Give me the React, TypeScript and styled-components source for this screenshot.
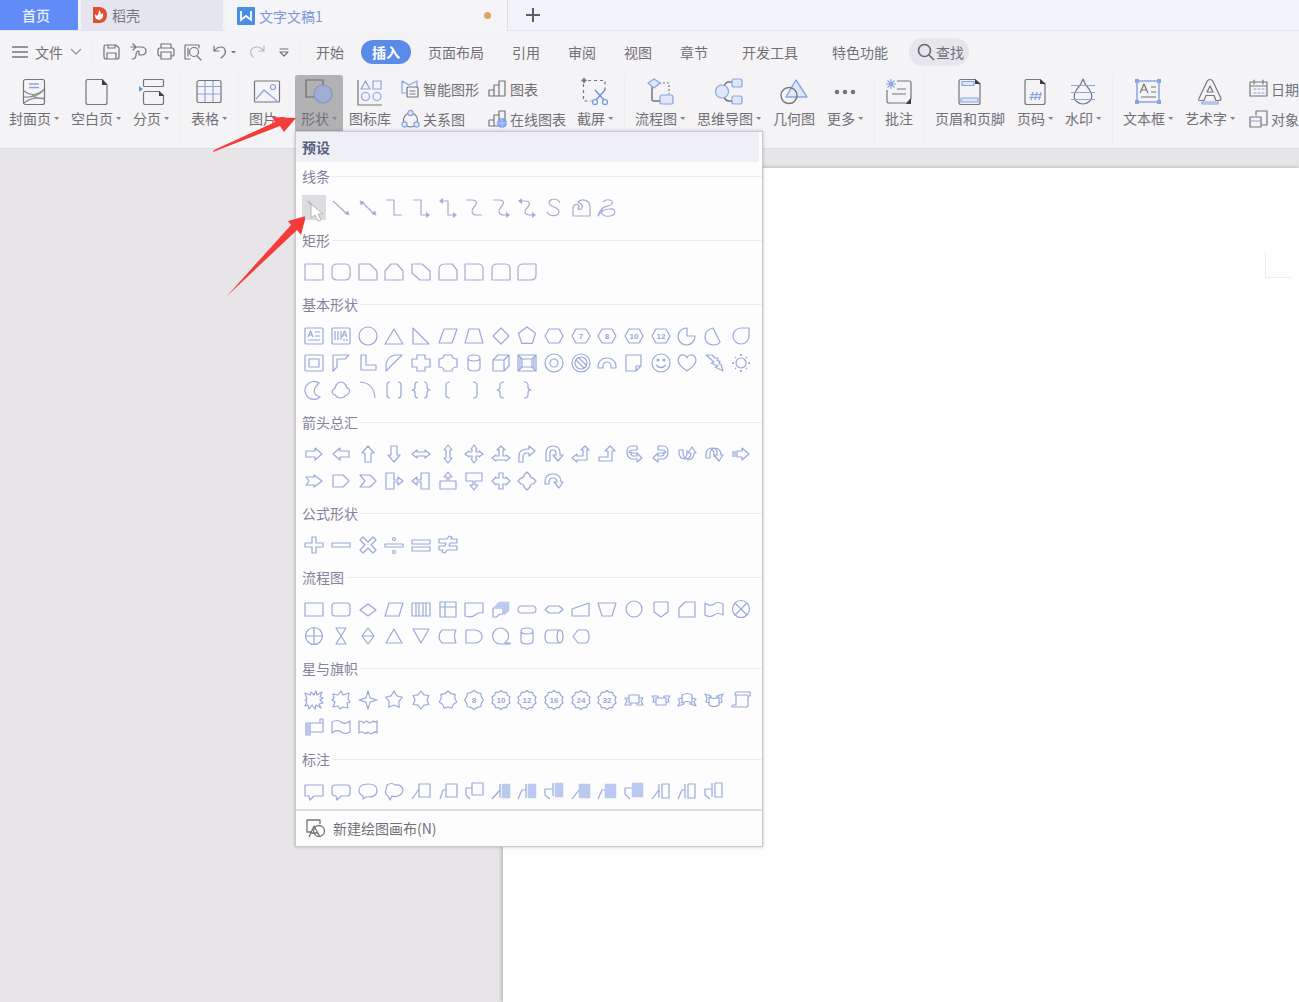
import React from "react";
import styled, { createGlobalStyle } from "styled-components";

const INK = "#75757b";
const BLUE = "#8aa5e2";
const PALE = "#dfe8fb";
const FOLD = "#3c3c42";

const GlobalStyle = createGlobalStyle`
  *, *::before, *::after { box-sizing: border-box; }
  body {
    margin: 0;
    font-family: "Noto Sans CJK SC", "Noto Sans", sans-serif;
    font-size: 14px;
    line-height: 20px;
    color: #717077;
    background: #e7e5e8;
  }
  button {
    font: inherit;
    color: inherit;
    border: 0;
    padding: 0;
    margin: 0;
    background: none;
    cursor: default;
    white-space: nowrap;
  }
  h2, h3 { margin: 0; font: inherit; }
  svg { display: block; flex: none; }
`;

const Shell = styled.div`
  position: relative;
  display: flex;
  flex-direction: column;
  min-height: 100vh;
  overflow: hidden;
`;

/* ---------- document tabs ---------- */

const TabStrip = styled.nav`
  display: flex;
  height: 31px;
  background: #f2f3f8;
  border-bottom: 1px solid #e4e4ec;
`;

const HomeTab = styled.button`
  width: 78px;
  height: 30px;
  padding-right: 6px;
  background: #618cf8;
  color: #e9f0ff;
  font-weight: 500;
`;

const DocTab = styled.button<{ $width: number; $active?: boolean }>`
  display: flex;
  align-items: center;
  gap: 4px;
  width: ${(p) => p.$width}px;
  height: ${(p) => (p.$active ? 31 : 30)}px;
  margin-left: 3px;
  padding: 0 16px 0 11px;
  background: ${(p) => (p.$active ? "#f5f5f9" : "#e4e5ef")};
  color: ${(p) => (p.$active ? "#7b97da" : "#75757d")};
  border-right: 1px solid ${(p) => (p.$active ? "#dedee6" : "#e4e5ef")};
`;

const DirtyDot = styled.span`
  width: 7px;
  height: 7px;
  margin-left: auto;
  border-radius: 50%;
  background: #dca362;
`;

const NewTab = styled.button`
  display: grid;
  place-items: center;
  width: 50px;
  height: 30px;
`;

/* ---------- menu bar ---------- */

const MenuBar = styled.div`
  display: flex;
  align-items: center;
  height: 42px;
  padding-left: 12px;
  background: #f4f3f6;
`;

const FileMenu = styled.button`
  display: flex;
  align-items: center;
  gap: 7px;
  width: 80px;
`;

const QuickTools = styled.div`
  display: flex;
  align-items: center;
  gap: 7px;
  height: 24px;
  padding: 0 6px 0 9px;
  border-left: 1px solid #ececf0;
  border-right: 1px solid #ececf0;
`;

const MenuTabs = styled.nav`
  display: flex;
  align-items: center;
  padding-left: 1px;
`;

const MenuTab = styled.button<{ $wide?: boolean }>`
  padding: 0 ${(p) => (p.$wide ? 17 : 14)}px;
  height: 24px;
`;

const ExtraTabs = styled.div`
  display: flex;
  padding-left: 3px;
`;

const ActiveTab = styled.button`
  height: 24px;
  margin: 0 3px;
  padding: 0 11px;
  border-radius: 12px;
  background: #5b8be8;
  color: #fff;
  font-weight: 700;
`;

const Search = styled.button`
  display: flex;
  align-items: center;
  gap: 1px;
  height: 28px;
  margin-left: 4px;
  padding: 0 5px 0 8px;
  border-radius: 14px;
  background: #e7e6ec;
`;

/* ---------- ribbon ---------- */

const Ribbon = styled.div`
  display: flex;
  height: 75px;
  padding: 2px 0 0 3px;
  background: #f4f3f6;
`;

const ToolButton = styled.button<{ $open?: boolean }>`
  display: flex;
  flex: none;
  flex-direction: column;
  align-items: center;
  gap: 2px;
  height: 56px;
  padding: 3px 6px 0;
  border-radius: 3px 3px 0 0;
  background: ${(p) => (p.$open ? "#b2b1b4" : "none")};
`;

const ToolLabel = styled.span`
  display: flex;
  align-items: center;
  gap: 3px;
`;

const Caret = styled.span`
  border: solid transparent;
  border-width: 3px 2px 0 3px;
  border-top-color: #85858b;
`;

const Divider = styled.span`
  flex: none;
  width: 1px;
  height: 70px;
  margin: 0 4px 0 5px;
  background: #edecf0;
`;

const ToolColumn = styled.div<{ $apart?: boolean }>`
  display: flex;
  flex: none;
  flex-direction: column;
  gap: 5px;
  margin-left: ${(p) => (p.$apart ? 4 : 0)}px;
  padding: 1px 5px 0 4px;
`;

const SmallTool = styled.button`
  display: flex;
  align-items: center;
  gap: 3px;
  height: 25px;
`;

const MenuAnchor = styled.div`
  position: relative;
  flex: none;
  margin-left: 4px;
`;

/* ---------- shape gallery ---------- */

const Gallery = styled.div`
  position: absolute;
  z-index: 2;
  top: 56px;
  left: 0;
  width: 468px;
  border: 1px solid #c9c8cc;
  background: #fdfdfe;
  box-shadow: 0 0 3px rgba(60, 60, 70, 0.3);
`;

const GalleryTitle = styled.h2`
  height: 30px;
  margin-right: 3px;
  padding: 5px 6px 0;
  background: #eff0f5;
  color: #565d7c;
  font-weight: 700;
`;

const SectionTitle = styled.h3`
  display: flex;
  align-items: center;
  gap: 2px;
  height: 30px;
  padding: 0 0 2px 6px;
  color: #82839a;

  &::after {
    content: "";
    flex: 1;
    height: 1px;
    background: #ececf1;
  }
`;

const ShapeGrid = styled.div`
  display: grid;
  grid-template-columns: repeat(17, 1fr);
  grid-auto-rows: 27px;
  place-items: center;
  padding: 2px 8px 5px 5px;
`;

const ShapeButton = styled.button<{ $hover?: boolean }>`
  display: grid;
  place-items: center;
  width: 24px;
  height: 25px;
  background: ${(p) => (p.$hover ? "#dddde1" : "none")};
`;

const NewCanvas = styled.button`
  display: flex;
  align-items: center;
  gap: 7px;
  width: 100%;
  height: 37px;
  padding: 0 0 2px 8px;
  border-top: 2px solid #e0e0e4;
`;

const Pointer = styled.svg`
  position: absolute;
  z-index: 4;
  top: 71px;
  left: 14px;
  pointer-events: none;
`;

/* ---------- document ---------- */

const Workspace = styled.main`
  display: flex;
  flex: 1;
  padding: 19px 0 0 503px;
  background: #e7e5e8;
  border-top: 1px solid #dddce0;
`;

const Page = styled.article`
  display: flex;
  flex: 1;
  justify-content: flex-end;
  padding: 84px 8px 0 0;
  background: #fefefe;
  box-shadow: -1px 0 4px rgba(70, 70, 80, 0.4);
`;

const MarginMark = styled.span`
  width: 26px;
  height: 26px;
  border: solid #ececee;
  border-width: 0 0 1px 1px;
`;

const Annotations = styled.svg`
  position: absolute;
  z-index: 3;
  top: 110px;
  left: 205px;
  pointer-events: none;
`;

/* ---------- shape drawings, on a 20 x 20 field ---------- */

function ring(n: number, outer: number, inner?: number, turn = -90) {
  const count = inner === undefined ? n : n * 2;
  const pts: string[] = [];
  for (let i = 0; i < count; i++) {
    const r = inner !== undefined && i % 2 ? inner : outer;
    const a = ((turn + (360 / count) * i) * Math.PI) / 180;
    pts.push((10 + r * Math.cos(a)).toFixed(2) + " " + (10 + r * Math.sin(a)).toFixed(2));
  }
  return "M" + pts.join("L") + "z";
}

const circle = (x: number, y: number, r: number) =>
  `M${x - r} ${y}a${r} ${r} 0 1 0 ${2 * r} 0a${r} ${r} 0 1 0 ${-2 * r} 0z`;

const HEX = "M1 10l4-7h10l4 7-4 7H5z";

interface Shape {
  name: string;
  d: string;
  solid?: string;
  tint?: string;
  text?: string;
}

const s = (name: string, d: string, extra: Partial<Shape> = {}): Shape => ({ name, d, ...extra });

const TIP_SE = "M18.5 17.5l-5-1.5 3.5-3.5z";
const TIP_NW = "M1.5 2.5l5 1.500-3.500 3.500z";
const TIP_E = "M19 17l-4-3v6z";
const TIP_W = "M1 3l4-3v6z";

const SECTIONS: { title: string; shapes: Shape[] }[] = [
  {
    title: "线条",
    shapes: [
      s("直线", "M4 3l12 13"),
      s("箭头", "M2 3l14 13", { solid: TIP_SE }),
      s("双箭头", "M4 4l12 12", { solid: TIP_SE + TIP_NW }),
      s("肘形连接符", "M2 2h8v15h8"),
      s("肘形箭头连接符", "M2 2h8v15h6", { solid: TIP_E }),
      s("肘形双箭头连接符", "M4 3h6v14h6", { solid: TIP_E + TIP_W }),
      s("曲线连接符", "M2 2h6c6 0 5 4 2 7s-3 8 3 8h5"),
      s("曲线箭头连接符", "M2 2h6c6 0 5 4 2 7s-3 8 3 8h3", { solid: TIP_E }),
      s("曲线双箭头连接符", "M4 3h4c6 0 5 4 2 7s-3 7 3 7h3", { solid: TIP_E + TIP_W }),
      s("曲线", "M16 5C14 0 5 0 5 5c0 4 10 4 10 8 0 6-9 6-12 1"),
      s("任意多边形", "M2 18v-6c-1-6 5-7 6-4l-1 3c3 2 6-3 3-5L7 4c4-4 12-2 12 5v9z"),
      s("自由曲线", "M6 4c4-4 11-2 9 2-2 3-8 1-10 5-2 6 3 8 8 7 7-1 6-8-1-7-5 0-8 2-11 7 1-4 3-7 6-9"),
    ],
  },
  {
    title: "矩形",
    shapes: [
      s("矩形", "M1 2h18v16H1z"),
      s("圆角矩形", "M6 2h8q5 0 5 5v6q0 5-5 5H6q-5 0-5-5V7q0-5 5-5z"),
      s("剪去单角矩形", "M1 2h11l7 7v9H1z"),
      s("剪去同侧角的矩形", "M1 9l6-7h6l6 7v9H1z"),
      s("剪去对角的矩形", "M1 2h10l8 7v9H9l-8-7z"),
      s("剪去并圆角单角的矩形", "M1 8q0-6 6-6h7l5 6v10H1z"),
      s("单圆角矩形", "M1 2h13q5 0 5 5v11H1z"),
      s("同侧圆角矩形", "M1 7q0-5 5-5h8q5 0 5 5v11H1z"),
      s("对角圆角矩形", "M1 7q0-5 5-5h13v11q0 5-5 5H1z"),
    ],
  },
  {
    title: "基本形状",
    shapes: [
      s("横向文本框", "M2 2h16q1 0 1 1v14q0 1-1 1H2q-1 0-1-1V3q0-1 1-1zM4 11l2.500-6L9 11M5 9h3M11 6h5M11 10h5M4 14h12"),
      s("竖向文本框", "M2 2h16q1 0 1 1v14q0 1-1 1H2q-1 0-1-1V3q0-1 1-1zM4 5v9M7 5v9M10 5v9M11 11l2.500-6L16 11M12 9h3M13 13v2M16 13v2"),
      s("椭圆", circle(10, 10, 9)),
      s("等腰三角形", "M10 3l9 15H1z"),
      s("直角三角形", "M2 2l16 16H2z"),
      s("平行四边形", "M6 3h13l-5 14H1z"),
      s("梯形", "M5 3h10l4 14H1z"),
      s("菱形", "M10 2l8 8-8 8-8-8z"),
      s("正五边形", ring(5, 9)),
      s("六边形", HEX),
      s("七边形", HEX, { text: "7" }),
      s("八边形", HEX, { text: "8" }),
      s("十边形", HEX, { text: "10" }),
      s("十二边形", HEX, { text: "12" }),
      s("饼形", "M10 2a8.500 8.500 0 1 0 8 8h-8z"),
      s("弦形", "M9 2q-8 2-8 9t8 8q5 0 7-3z"),
      s("泪滴形", "M10 2h8v8a8 8 0 1 1-8-8z"),
      s("图文框", "M2 2h16q1 0 1 1v14q0 1-1 1H2q-1 0-1-1V3q0-1 1-1zM5 6h10v8H5z"),
      s("半闭框", "M2 2h16l-4 4H6v8l-4 4z"),
      s("L 形", "M3 2h5v10h10v5H3z"),
      s("斜纹", "M2 11q2-8 9-9h7L2 18z"),
      s("十字形", "M6 2h8v4h5v8h-5v4H6v-4H1V6h5z"),
      s("缺角矩形", "M6 2h8q0 4 5 4v8q-5 0-5 4H6q0-4-5-4V6q5 0 5-4z"),
      s("圆柱形", "M4 5q0-3 6-3t6 3v10q0 3-6 3t-6-3zq0 3 6 3t6-3"),
      s("立方体", "M2 7l5-5h11v11l-5 5H2zh11v11M13 7l5-5"),
      s("棱台", "M1 2h18v16H1zM5 6h10v8H5zM1 2l4 4M19 2l-4 4M1 18l4-4M19 18l-4-4M3 4v12M17 4v12"),
      s("同心圆", circle(10, 10, 9) + circle(10, 10, 4)),
      s("禁止符", circle(10, 10, 9) + circle(10, 10, 6) + "M5 7l8 8M8 5l7 7"),
      s("空心弧", "M1 15v-2a9 8 0 0 1 18 0v2h-5v-2a4 4 0 0 0-8 0v2z"),
      s("折角形", "M2 2h15v11l-5 5H2zM17 13h-5v5"),
      s("笑脸", circle(10, 10, 9) + "M5 12q5 5 10 0", { solid: circle(7, 7, 1.5) + circle(13, 7, 1.5) }),
      s("心形", "M10 18Q1 12 1 7q1-6 6-5 3 1 3 3 0-2 3-3 5-1 6 5 0 5-9 11z"),
      s("闪电形", "M2 2h6l3 3h3l-1 3h3l-1 3h2l2 7-8-4 3-1-7-3 3-1z"),
      s("太阳形", circle(10, 10, 5) + "M10 1v2M10 17v2M1 10h2M17 10h2M4 4l1 1M15 15l1 1M16 4l-1 1M5 15l-1 1", {
        solid: circle(10, 2, 1) + circle(10, 18, 1) + circle(2, 10, 1) + circle(18, 10, 1),
      }),
      s("新月形", "M15 3A9 9 0 1 0 16 17Q5 13 15 3z"),
      s("云形", "M5 5q5-6 10 0 0 3 3 4 2 3-2 6-2 0-3 2-4 2-7 0-1-2-4-3-2-3 1-5 2-1 2-4z"),
      s("弧形", "M2 2q14 1 15 16"),
      s("双括号", "M6 2Q3 2 3 5v10q0 3 3 3M14 2q3 0 3 3v10q0 3-3 3"),
      s("双大括号", "M7 2Q4 2 4 5v2q0 3-3 3 3 0 3 3v2q0 3 3 3M13 2q3 0 3 3v2q0 3 3 3-3 0-3 3v2q0 3-3 3"),
      s("左中括号", "M12 2Q8 2 8 5v10q0 3 4 3"),
      s("右中括号", "M9 2q4 0 4 3v10q0 3-4 3"),
      s("左大括号", "M13 2Q9 2 9 5v2q0 3-3 3 3 0 3 3v2q0 3 4 3"),
      s("右大括号", "M7 2q4 0 4 3v2q0 3 3 3-3 0-3 3v2q0 3-4 3"),
    ],
  },
  {
    title: "箭头总汇",
    shapes: [
      s("右箭头", "M2 7h9V4l7 6-7 6v-3H2z"),
      s("左箭头", "M18 7H9V4l-7 6 7 6v-3h9z"),
      s("上箭头", "M7 18V9H4l6-7 6 7h-3v9z"),
      s("下箭头", "M7 2v9H4l6 7 6-7h-3V2z"),
      s("左右箭头", "M1 10l5-4v2h8V6l5 4-5 4v-2H6v2z"),
      s("上下箭头", "M10 1l4 5h-2v8h2l-4 5-4-5h2V6H6z"),
      s("十字箭头", "M10 1l3 4h-1v3h3V7l4 3-4 3v-1h-3v3h1l-3 4-3-4h1v-3H5v1l-4-3 4-3v1h3V5H7z"),
      s("丁字箭头", "M10 2l4 4h-2v6h3v-1l4 3-4 3v-1H5v1l-4-3 4-3v1h3V6H6z"),
      s("圆角右箭头", "M2 18v-6q0-7 8-7h2V2l6 5-6 5V9h-2q-4 0-4 4v5z"),
      s("手杖形箭头", "M2 17V9q0-7 7-7t7 7v2h3l-5 6-5-6h3V9q0-3-3-3T6 9v8z"),
      s("直角双向箭头", "M1 14l5-4v2h6V6h-2l4-4 4 4h-2v10H6v2z"),
      s("直角上箭头", "M2 13h9V7H8l5-5 5 5h-3v10H2z"),
      s("左弧形箭头", "M13 2H8Q3 2 3 8t5 7h5v3l5-4-5-5v3H9Q7 12 7 9M13 2v4H9Q6 6 5 8q1 1 4 1h4"),
      s("右弧形箭头", "M7 2h5q5 0 5 6t-5 7H7v3l-5-4 5-5v3h4q2 0 2-3M7 2v4h4q3 0 4 2-1 1-4 1H7"),
      s("上弧形箭头", "M2 6v2q0 7 6 7t6-6h-3l4-6 4 6h-2q0 7-7 7M2 6h4v3q0 3 2 5 2-2 2-5V6"),
      s("下弧形箭头", "M2 14v-3q0-7 6-7t5 7h-3l5 6 4-6h-2q0-7-7-7M2 14h4v-4q0-3 2-5 2 2 2 5v3"),
      s("虚尾箭头", "M2 7v6M4 7v6M6 7h5V4l7 6-7 6v-3H6z"),
      s("燕尾形箭头", "M2 6h8V4l8 6-8 6v-2H2l3-4z"),
      s("五边形", "M2 4h10l6 6-6 6H2z"),
      s("V 形", "M2 4h10l6 6-6 6H2l5-6z"),
      s("右箭头标注", "M2 2h8v7h4V6l5 4-5 4v-3h-4v7H2z"),
      s("左箭头标注", "M18 2h-8v7H6V6l-5 4 5 4v-3h4v7h8z"),
      s("上箭头标注", "M2 18v-8h7V6H6l4-5 4 5h-3v4h7v8z"),
      s("下箭头标注", "M2 2v8h7v4H6l4 5 4-5h-3v-4h7V2z"),
      s("左右箭头标注", "M8 2h4v5h3V6l4 4-4 4v-1h-3v5H8v-5H5v1l-4-4 4-4v1h3z"),
      s("十字箭头标注", "M10 1l3 3q0 3 3 3l3 3-3 3q-3 0-3 3l-3 3-3-3q0-3-3-3l-3-3 3-3q3 0 3-3z"),
      s("环形箭头", "M1 11q0-8 8-8t8 8h2l-4 6-5-6h3q0-4-4-4t-4 4v2H1z"),
    ],
  },
  {
    title: "公式形状",
    shapes: [
      s("加号", "M8 2h4v6h7v4h-7v6H8v-6H1V8h7z"),
      s("减号", "M1 8h18v4H1z"),
      s("乘号", "M5 2l5 5 5-5 3 3-5 5 5 5-3 3-5-5-5 5-3-3 5-5-5-5z"),
      s("除号", "M1 9h18v3H1z" + circle(10, 4, 1.5) + circle(10, 17, 1.5)),
      s("等号", "M1 5h18v4H1zM1 12h18v4H1z"),
      s("不等号", "M1 4h8l2-3 3 1-1 2h6v4h-7l-1 3h8v4H9l-2 3-3-1 1-2H1v-4h6l1-3H1z"),
    ],
  },
  {
    title: "流程图",
    shapes: [
      s("过程", "M1 4h18v13H1z"),
      s("可选过程", "M4 4h12q3 0 3 3v7q0 3-3 3H4q-3 0-3-3V7q0-3 3-3z"),
      s("决策", "M10 5l8 6-8 6-8-6z"),
      s("数据", "M5 4h14l-4 13H1z"),
      s("预定义过程", "M1 4h18v13H1zM5 4v13M15 4v13M8 4v13M12 4v13"),
      s("内部贮存", "M2 3h16v15H2zM7 3v15M2 8h16"),
      s("文档", "M1 4h18v10q-5-1-8 2t-10 1z"),
      s("多文档", "M2 9h10v6q-5 0-6 3H2z", { tint: "M3 8l5-5h10v9l-5 4V8z" }),
      s("终止", "M5 7h10q4 0 4 3.500T15 14H5q-4 0-4-3.500T5 7z"),
      s("准备", "M5 7h10l4 3.500L15 14H5l-4-3.500z"),
      s("手动输入", "M1 10l17-6v13H1z"),
      s("手动操作", "M1 4h18l-4 13H5z"),
      s("联系", circle(10, 10, 8)),
      s("离页连接符", "M3 3h14v10l-7 5-7-5z"),
      s("卡片", "M2 9l6-6h10v15H2z"),
      s("资料带", "M1 4q5 4 9 1t9 0v11q-5-3-9 0t-9 0z"),
      s("汇总连接", circle(10, 10, 8.5) + "M4 4l12 12M16 4L4 16"),
      s("或者", circle(10, 10, 8.5) + "M10 2v16M2 10h16"),
      s("对照", "M5 2h10L5 18h10z"),
      s("排序", "M10 2l6 8-6 8-6-8zM4 10h12"),
      s("摘录", "M10 3l8 14H2z"),
      s("合并", "M2 3h16l-8 14z"),
      s("库存数据", "M4 4h14q-3 6 0 13H4q-6-6 0-13z"),
      s("延期", "M2 4h9q7 1 7 6.500T11 17H2z"),
      s("顺序访问存储器", "M14 17h5v1h-9a8 8 0 1 1 7-5z"),
      s("磁盘", "M4 5q0-3 6-3t6 3v10q0 3-6 3t-6-3zq0 3 6 3t6-3"),
      s("直接访问存储器", "M4 4h12q3 1 3 6.500T16 17H4q-3-1-3-6.500T4 4zM16 4q-3 1-3 6.500t3 6.500"),
      s("显示", "M7 4h8q3 1 3 6.500T15 17H7l-5-6.500z"),
    ],
  },
  {
    title: "星与旗帜",
    shapes: [
      s("爆炸形 1", "M1 3l5 2 1-3 3 3 2-4 1 4 5-3-2 5 3 1-3 2 3 3-4 1 2 4-5-3-1 4-3-4-3 4-1-4-3 1 2-4-2-2 2-1z"),
      s("爆炸形 2", "M2 4l5 1 3-4 2 4 6-2-1 6 2 3-3 1 1 5-5-1-3 2-2-3-5 1 2-5-3-2 2-2z"),
      s("十字星", ring(4, 9, 3)),
      s("五角星", ring(5, 9, 5)),
      s("六角星", ring(6, 9, 6)),
      s("七角星", ring(7, 9, 7)),
      s("八角星", ring(8, 9.5, 8), { text: "8" }),
      s("十角星", ring(10, 9.5, 8), { text: "10" }),
      s("十二角星", ring(10, 9.5, 8), { text: "12" }),
      s("十六角星", ring(10, 9.5, 8), { text: "16" }),
      s("二十四角星", ring(10, 9.5, 8), { text: "24" }),
      s("三十二角星", ring(10, 9.5, 8), { text: "32" }),
      s("上凸带形", "M5 5h10v8H5zM5 8H1l2 3-2 4h6v-2M15 8h4l-2 3 2 4h-6v-2"),
      s("前凸带形", "M5 8h10v7H5zM5 12H2l1-3-2-3h6v2M15 12h3l-1-3 2-3h-6v2"),
      s("上凸弯带形", "M5 5q5-3 10 0v8q-5-3-10 0zM5 8l-4 1 2 3-2 4 6-2v-2M15 8l4 1-2 3 2 4-6-2v-2"),
      s("前凸弯带形", "M5 7q5 3 10 0v8q-5 3-10 0zM5 13l-3-1 1-4-2-4 6 2v2M15 13l3-1-1-4 2-4-6 2v2"),
      s("竖卷形", "M5 5v10H2q-1 0-1 2h14q2 0 2-2V6h2V2H6Q4 2 4 5h13"),
      s("横卷形", "M2 6h14V2h3v13H6v3H2zM6 6v9M16 2v4h3", { tint: "M3 7h2v10H3z" }),
      s("波形", "M1 5q5-3 9 0t9-1v11q-5 3-9 0t-9 1z"),
      s("双波形", "M1 4q3 0 5 2 2-3 4-1 3 2 5-1 2 2 4 0v12q-2-2-4 0-3 2-5-1-2 2-4 1-2-2-5 0z"),
    ],
  },
  {
    title: "标注",
    shapes: [
      s("矩形标注", "M1 4h18v11h-9l-4 4-1-4H1z"),
      s("圆角矩形标注", "M4 4h12q3 0 3 3v5q0 3-3 3h-6l-4 4-1-4q-4 0-4-3V7q0-3 3-3z"),
      s("椭圆形标注", "M5 18v-3q-4-2-4-5.500Q1 3 10 3t9 6.500T10 16H8z"),
      s("云形标注", "M3 4q5-3 8 0 6-1 8 4 0 5-5 7-4 1-6 0l-2 4-2-4q-4-2-2-6z"),
      s("线形标注 1", "M8 3h11v13H8zM8 8l-7 10"),
      s("线形标注 2", "M8 3h11v13H8zM8 9H5L2 18"),
      s("线形标注 3", "M8 2h11v12H8zM8 7H2v7l4 4"),
      s("线形标注 1（带强调线）", "M9 3v14M9 9l-8 9", { tint: "M11 3h8v14h-8z" }),
      s("线形标注 2（带强调线）", "M9 3v14M9 9H5L1 18", { tint: "M11 3h8v14h-8z" }),
      s("线形标注 3（带强调线）", "M9 2v13M9 8H1v6l5 4", { tint: "M11 2h8v14h-8z" }),
      s("线形标注 1（无边框）", "M8 9l-7 9", { tint: "M8 3h11v14H8z" }),
      s("线形标注 2（无边框）", "M8 9H5L1 18", { tint: "M8 3h11v14H8z" }),
      s("线形标注 3（无边框）", "M8 7H1v6l5 5", { tint: "M8 2h11v14H8z" }),
      s("线形标注 1（带边框和强调线）", "M8 3v14M8 9l-7 9M11 3h7v14h-7z"),
      s("线形标注 2（带边框和强调线）", "M8 3v14M8 9H5L1 18M11 3h7v14h-7z"),
      s("线形标注 3（带边框和强调线）", "M8 2v14M8 8H1v6l5 4M11 2h7v14h-7z"),
    ],
  },
];

function ShapeGlyph({ shape, color }: { shape: Shape; color: string }) {
  return (
    <svg width="20" height="20" viewBox="0 0 20 20" fill="none" stroke={color} strokeWidth="1.2" strokeLinejoin="round">
      {shape.tint && <path d={shape.tint} fill="#b9c9f0" stroke="#b9c9f0" strokeWidth="0.5" />}
      <path d={shape.d} />
      {shape.solid && <path d={shape.solid} fill={color} stroke="none" />}
      {shape.text && (
        <text x="10" y="13" textAnchor="middle" fontSize="8" fontWeight="700" fontFamily="Liberation Sans, sans-serif" fill={color} stroke="none">
          {shape.text}
        </text>
      )}
    </svg>
  );
}

/* ---------- ribbon drawings, on a 28 x 28 field ---------- */

const Big = ({ children }: { children: React.ReactNode }) => (
  <svg width="28" height="28" viewBox="0 0 28 28" fill="none" stroke={INK} strokeWidth="1.2" strokeLinejoin="round">
    {children}
  </svg>
);

const Small = ({ children, size = 20 }: { children: React.ReactNode; size?: number }) => (
  <svg width={size} height="20" viewBox={`0 0 ${size} 20`} fill="none" stroke={INK} strokeWidth="1.2" strokeLinejoin="round" strokeLinecap="round">
    {children}
  </svg>
);

const icons = {
  cover: (
    <Big>
      <rect x="3.5" y="1.5" width="21" height="25" rx="2" />
      <path d="M9 6h10M9 9.500h10" stroke={BLUE} strokeWidth="1.5" />
      <path d="M4 13q6 5 12 3t8-5M4 19q12 1 20-7M4 25q8-7 20-4M12 17q4 4 12 3" opacity="0.8" />
    </Big>
  ),
  blank: (
    <Big>
      <path d="M6 1.500h14l5 5v18q0 2-2 2H6q-2 0-2-2v-21q0-2 2-2z" />
      <path d="M20 1v6h5z" fill={FOLD} stroke="none" />
    </Big>
  ),
  breakPage: (
    <Big>
      <rect x="6.5" y="1.5" width="20" height="7" rx="1" />
      <path d="M8 13.500h14l4.500 4v7q0 2-2 2H8q-1.500 0-1.500-2v-9q0-2 1.500-2z" />
      <path d="M22 13v5h5z" fill={FOLD} stroke="none" />
      <path d="M2 8l4 3-4 3z" fill="#6f93e4" stroke="none" />
    </Big>
  ),
  table: (
    <Big>
      <path d="M2 8.500h24M2 16h24M10 2v23M18 2v23" stroke={BLUE} />
      <rect x="2" y="2.5" width="24" height="22" rx="2" />
    </Big>
  ),
  picture: (
    <Big>
      <rect x="1.5" y="3" width="25" height="21" rx="1" />
      <path d="M3 21l8-9 13 11" stroke={BLUE} />
      <circle cx="20" cy="9" r="2.5" stroke={BLUE} />
    </Big>
  ),
  shapes: (
    <Big>
      <path d="M1 2h17v17H1z" stroke="#6a6a72" />
      <circle cx="18" cy="16" r="9" fill="#9fadd0" stroke="#8294c9" />
    </Big>
  ),
  library: (
    <Big>
      <path d="M2 2v25h24" />
      <path d="M9.500 3l4.500 8H5zM17 3h8v8h-8z" stroke={BLUE} />
      <circle cx="9.5" cy="18.5" r="4" stroke={BLUE} />
      <circle cx="21" cy="18.5" r="4" stroke={BLUE} />
    </Big>
  ),
  capture: (
    <Big>
      <path d="M2.500 6v17h8M7 2.500h17v11" strokeDasharray="3 3" />
      <path d="M0.500 2.500h5M3 0v5" strokeWidth="1.8" />
      <path d="M14 12l9 10M24 12l-9 10" stroke="#6f93e4" strokeWidth="1.5" />
      <circle cx="14" cy="24" r="2.5" stroke="#6f93e4" />
      <circle cx="24" cy="24" r="2.5" stroke="#6f93e4" />
    </Big>
  ),
  flow: (
    <Big>
      <path d="M6 9v12q0 2 2 2h6" strokeWidth="1.5" />
      <path d="M13 5h10v11" strokeDasharray="2 2" />
      <path d="M8 1l6 4-6 5-6-5z" fill={PALE} stroke={BLUE} />
      <rect x="14" y="17" width="13" height="9" rx="2" fill={PALE} stroke={BLUE} />
    </Big>
  ),
  mind: (
    <Big>
      <path d="M17 4h-3q-4 0-5 5M17 23h-3q-4 0-5-5" strokeWidth="1.5" />
      <circle cx="7" cy="13.5" r="6.5" fill={PALE} stroke={BLUE} />
      <rect x="17" y="1" width="10" height="8" rx="2" fill={PALE} stroke={BLUE} />
      <rect x="17" y="18" width="10" height="8" rx="2" fill={PALE} stroke={BLUE} />
    </Big>
  ),
  geometry: (
    <Big>
      <path d="M16 2l11 17H6z" fill={PALE} stroke={BLUE} strokeWidth="1.4" />
      <circle cx="9" cy="17.5" r="8" strokeWidth="1.4" />
    </Big>
  ),
  more: (
    <Big>
      <g fill={INK} stroke="none">
        <circle cx="6" cy="14" r="2.3" />
        <circle cx="14" cy="14" r="2.3" />
        <circle cx="22" cy="14" r="2.3" />
      </g>
    </Big>
  ),
  comment: (
    <Big>
      <path d="M12 3h12q2 0 2 2v16l-4 4H4q-2 0-2-2V12" />
      <path d="M26 20v6h-5z" fill={FOLD} stroke="none" />
      <path d="M12 11h9M7 16h14" />
      <path d="M6 1v10M1 6h10M2.500 2.500l7 7M9.500 2.500l-7 7" stroke={BLUE} />
    </Big>
  ),
  header: (
    <Big>
      <path d="M5 1.500h14l5 5v18q0 2-2 2H5q-2 0-2-2v-21q0-2 2-2z" />
      <path d="M6 3.500h12v4H6zM5 20h17v4H5z" fill={PALE} stroke={BLUE} />
      <path d="M19 1v5h6z" fill={FOLD} stroke="none" />
    </Big>
  ),
  pageNumber: (
    <Big>
      <path d="M6 1.500h13l5 5v18q0 2-2 2H6q-2 0-2-2v-21q0-2 2-2z" />
      <path d="M19 1v5h6z" fill={FOLD} stroke="none" />
      <path d="M12 14l-2 8M16 14l-2 8M20 14l-2 8M9 16.500h12M8 19.500h12" stroke={BLUE} />
    </Big>
  ),
  watermark: (
    <Big>
      <path d="M14 1q2 6 6 10 5 7 1 12-7 6-14 0-4-5 1-12 4-4 6-10z" />
      <path d="M2 7.500h24M2 14.500h24M2 21.500h24" stroke={BLUE} />
    </Big>
  ),
  textbox: (
    <Big>
      <rect x="3" y="3" width="22" height="21" stroke={BLUE} strokeWidth="1.5" />
      <path d="M1 1h4v4H1zM23 1h4v4h-4zM1 22h4v4H1zM23 22h4v4h-4z" fill={BLUE} stroke="none" />
      <path d="M6 15l4-9 4 9M7 12h5M17 9h5M17 14h5M7 19h15" />
    </Big>
  ),
  wordart: (
    <Big>
      <path d="M14 1.500q2 0 3 2l8 17q0 2-2 2h-3l-2-5h-8l-2 5H4q-2 0-1-2l8-17q1-2 3-2z" />
      <path d="M14 8l3 6h-6z" />
      <path d="M6 24h16v2H6z" fill={PALE} stroke={BLUE} />
    </Big>
  ),
  smart: (
    <Small size={19}>
      <path d="M1 2l7 4 8-4v6M1 2v12h4" stroke={BLUE} />
      <rect x="6" y="8" width="11" height="10" rx="1" />
      <path d="M9 12h5M9 15h5" />
    </Small>
  ),
  relation: (
    <Small size={19}>
      <circle cx="9.5" cy="11" r="7" />
      <g fill={PALE} stroke={BLUE}>
        <circle cx="9.5" cy="4" r="2.6" />
        <circle cx="3.5" cy="15.5" r="2.6" />
        <circle cx="15.5" cy="15.5" r="2.6" />
      </g>
    </Small>
  ),
  chart: (
    <Small size={19}>
      <path d="M1 11h5v6H1zM6 6h5v11H6zM11 2h6v15h-6z" />
    </Small>
  ),
  onlineChart: (
    <Small size={19}>
      <path d="M1 11h5v6H1zM6 6h5v11H6zM11 2h6v15h-6z" />
      <circle cx="14" cy="14" r="4.500" fill="#84a5ea" stroke="#84a5ea" />
      <path d="M9 14h10M14 9v10" stroke="#b5c9f5" />
    </Small>
  ),
  date: (
    <Small size={19}>
      <path d="M1 3h17v14H1zM1 7h17M5 1v4M14 1v4" />
      <path d="M5 10h2M9 10h2M13 10h2M5 14h2M9 14h2M13 14h2" stroke={BLUE} />
    </Small>
  ),
  object: (
    <Small size={19}>
      <path d="M7 6V2h11v14h-5" />
      <path d="M1 8h11v10H1z" />
      <path d="M1 12h11" stroke={BLUE} />
    </Small>
  ),
};

type IconName = keyof typeof icons;

function Tool({ icon, label, menu, open }: { icon: IconName; label: string; menu?: boolean; open?: boolean }) {
  return (
    <ToolButton type="button" $open={open} aria-expanded={open}>
      {icons[icon]}
      <ToolLabel>
        {label}
        {menu && <Caret />}
      </ToolLabel>
    </ToolButton>
  );
}

function Pair({ items, apart }: { items: [IconName, string][]; apart?: boolean }) {
  return (
    <ToolColumn $apart={apart}>
      {items.map(([icon, label]) => (
        <SmallTool type="button" key={label}>
          {icons[icon]}
          {label}
        </SmallTool>
      ))}
    </ToolColumn>
  );
}

function ShapeGallery() {
  return (
    <Gallery>
      <GalleryTitle>预设</GalleryTitle>
      {SECTIONS.map((section, index) => (
        <section key={section.title}>
          <SectionTitle>{section.title}</SectionTitle>
          <ShapeGrid>
            {section.shapes.map((shape, i) => (
              <ShapeButton type="button" key={shape.name} aria-label={shape.name} $hover={index === 0 && i === 0}>
                <ShapeGlyph shape={shape} color={index < 2 ? "#a4acd2" : "#98a9da"} />
              </ShapeButton>
            ))}
          </ShapeGrid>
        </section>
      ))}
      <NewCanvas type="button">
        <svg width="22" height="22" viewBox="0 0 22 22" fill="none" stroke={INK} strokeWidth="1.3" strokeLinejoin="round">
          <path d="M7 15H3V3h13v4M5 20l5-11 6 11M7 16h7" />
          <circle cx="15" cy="14" r="5.5" />
        </svg>
        新建绘图画布(N)
      </NewCanvas>
      <Pointer width="16" height="20" viewBox="0 0 16 20">
        <path d="M1 1v14l4-3 3 6 3-1-3-6h5z" fill="#fff" stroke="#b4b4ba" strokeLinejoin="round" />
      </Pointer>
    </Gallery>
  );
}

export default function App() {
  return (
    <Shell>
      <GlobalStyle />
      <TabStrip>
        <HomeTab type="button">首页</HomeTab>
        <DocTab type="button" $width={142}>
          <svg width="16" height="18" viewBox="0 0 16 18">
            <path d="M1 1h7q7 1 7 8t-7 8H1z" fill="#e2502f" />
            <path d="M7 4q3 3 1 5l3-2q1 6-4 7-5-1-4-6l2 2q2-2 2-6z" fill="#fff" />
          </svg>
          稻壳
        </DocTab>
        <DocTab type="button" $width={282} $active>
          <svg width="18" height="18" viewBox="0 0 18 18">
            <rect width="18" height="18" rx="1" fill="#4a8de8" />
            <path d="M4 4v9l5-4 5 4V4" fill="none" stroke="#fff" strokeWidth="1.8" />
          </svg>
          文字文稿1
          <DirtyDot />
        </DocTab>
        <NewTab type="button" aria-label="新建">
          <svg width="14" height="14" viewBox="0 0 14 14" stroke="#5e5e65" strokeWidth="2">
            <path d="M7 0v14M0 7h14" />
          </svg>
        </NewTab>
      </TabStrip>

      <MenuBar>
        <FileMenu type="button">
          <svg width="16" height="12" viewBox="0 0 16 12" stroke={INK} strokeWidth="1.3">
            <path d="M0 1h16M0 6h16M0 11h16" />
          </svg>
          文件
          <svg width="12" height="8" viewBox="0 0 12 8" fill="none" stroke="#96969c" strokeWidth="1.3">
            <path d="M1 1l5 5 5-5" />
          </svg>
        </FileMenu>
        <QuickTools>
          <Small>
            <path d="M4 3h10l3 3v9q0 2-2 2H4q-2 0-2-2V5q0-2 2-2zM6 3v3h7V3M5 17v-6h9v6" />
          </Small>
          <Small>
            <path d="M4 2l3 3-3 3M2 5h10q5 0 5 4t-5 4h-2M10 9q-3 0-3 4t-4 4M10 9v4" />
          </Small>
          <Small>
            <path d="M5 6V2h10v4M5 14H4q-2 0-2-2V8q0-2 2-2h12q2 0 2 2v4q0 2-2 2h-1M5 10h10v7H5z" />
          </Small>
          <Small>
            <path d="M7 17H2V3h14v3" />
            <circle cx="11" cy="10" r="4.5" />
            <path d="M14 14l4 4M5 6v8" />
          </Small>
          <Small size={30}>
            <path d="M4 4v5h5M4 9q5-6 10-3 4 5-3 10" />
            <path d="M21 9h5l-2.500 2.500z" fill={INK} stroke="none" />
          </Small>
          <Small>
            <path d="M17 4v5h-5M17 9q-5-6-11-3-5 4 0 9" stroke="#b9b9be" />
          </Small>
          <Small>
            <path d="M6 7h8M6 10h8l-4 4z" />
          </Small>
        </QuickTools>
        <MenuTabs>
          <MenuTab type="button">开始</MenuTab>
          <ActiveTab type="button">插入</ActiveTab>
          {["页面布局", "引用", "审阅", "视图", "章节"].map((t) => (
            <MenuTab type="button" key={t}>
              {t}
            </MenuTab>
          ))}
          <ExtraTabs>
            <MenuTab type="button" $wide>
              开发工具
            </MenuTab>
            <MenuTab type="button" $wide>
              特色功能
            </MenuTab>
          </ExtraTabs>
        </MenuTabs>
        <Search type="button">
          <svg width="18" height="18" viewBox="0 0 18 18" fill="none" stroke="#66666c" strokeWidth="1.6">
            <circle cx="7.5" cy="7.5" r="6" />
            <path d="M12 12l5 5" />
          </svg>
          查找
        </Search>
      </MenuBar>

      <Ribbon>
        <Tool icon="cover" label="封面页" menu />
        <Tool icon="blank" label="空白页" menu />
        <Tool icon="breakPage" label="分页" menu />
        <Divider />
        <Tool icon="table" label="表格" menu />
        <Divider />
        <Tool icon="picture" label="图片" menu />
        <MenuAnchor>
          <Tool icon="shapes" label="形状" menu open />
          <ShapeGallery />
        </MenuAnchor>
        <Tool icon="library" label="图标库" />
        <Pair items={[["smart", "智能图形"], ["relation", "关系图"]]} />
        <Pair items={[["chart", "图表"], ["onlineChart", "在线图表"]]} />
        <Tool icon="capture" label="截屏" menu />
        <Divider />
        <Tool icon="flow" label="流程图" menu />
        <Tool icon="mind" label="思维导图" menu />
        <Tool icon="geometry" label="几何图" />
        <Tool icon="more" label="更多" menu />
        <Divider />
        <Tool icon="comment" label="批注" />
        <Divider />
        <Tool icon="header" label="页眉和页脚" />
        <Tool icon="pageNumber" label="页码" menu />
        <Tool icon="watermark" label="水印" menu />
        <Divider />
        <Tool icon="textbox" label="文本框" menu />
        <Tool icon="wordart" label="艺术字" menu />
        <Pair items={[["date", "日期"], ["object", "对象"]]} apart />
      </Ribbon>

      <Workspace>
        <Page>
          <MarginMark />
        </Page>
      </Workspace>

      <Annotations width="100" height="190" viewBox="205 110 100 190" fill="#f63b3b">
        <path d="M213 152l1-2 61-28-3-5 24 1-12 14-4-6z" />
        <path d="M227 296l64-71-3-4 18-5-5 19-4-5z" />
      </Annotations>
    </Shell>
  );
}
